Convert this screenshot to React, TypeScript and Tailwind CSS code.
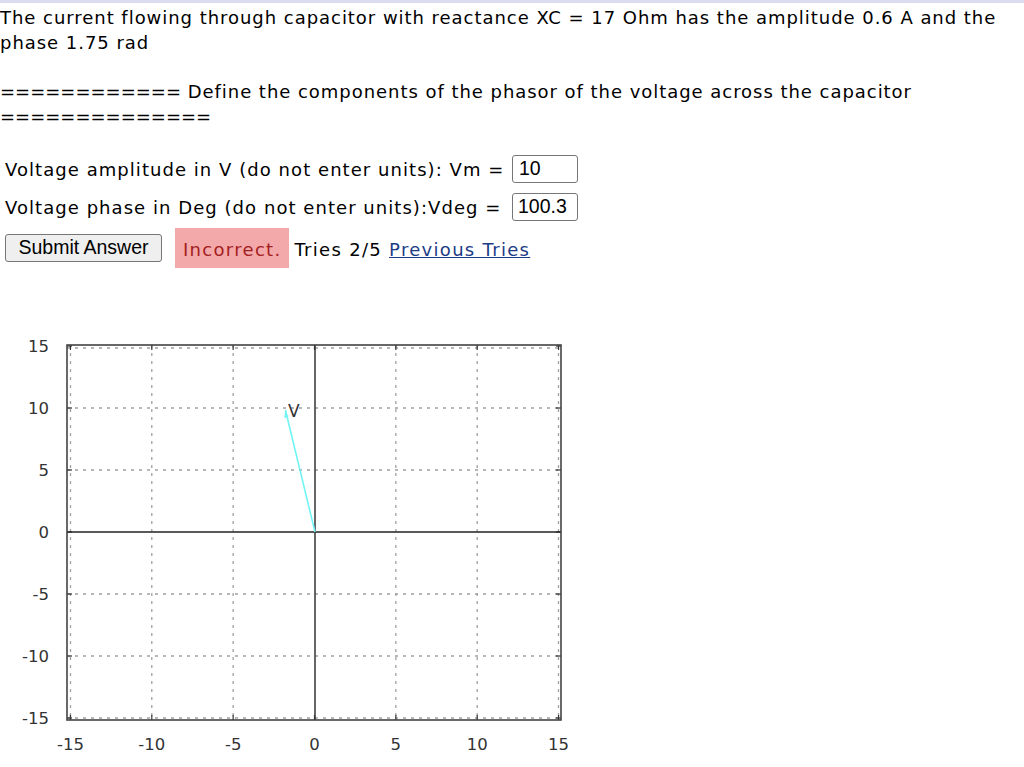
import React from 'react';

const BODY_FONT = { fontFamily: '"DejaVu Sans", Verdana, sans-serif' };

// plot mapping: page coordinates (viewBox uses page y offset)
const CX = 314.5;
const CY = 533;
const SX = 16.27;
const SY = 12.4;
const px = (v: number) => CX + v * SX;
const py = (v: number) => CY - v * SY;

const TICKS = [-15, -10, -5, 0, 5, 10, 15];

function PhasorPlot() {
  const left = 67;
  const right = 561;
  const top = 346;
  const bottom = 721;
  const ang = (100.3 * Math.PI) / 180;
  const tipX = px(10 * Math.cos(ang));
  const tipY = py(10 * Math.sin(ang));

  return (
    <svg
      width={580}
      height={437}
      viewBox="0 330 580 437"
      className="block"
      style={{ fontFamily: '"DejaVu Sans", sans-serif' }}
    >
      {/* grid */}
      {TICKS.filter((t) => t !== 0).map((t) => {
        const x = t === -15 ? 70.5 : t === 15 ? 558.5 : px(t);
        const y = t === 15 ? 349 : t === -15 ? 719 : py(t);
        return (
          <g key={t} stroke="#a0a0a0" strokeWidth={1.3} strokeDasharray="3 5">
            <line x1={x} y1={top} x2={x} y2={bottom} />
            <line x1={left} y1={y} x2={right} y2={y} />
          </g>
        );
      })}

      {/* ticks on border */}
      {TICKS.map((t) => (
        <g key={`t${t}`} stroke="#333" strokeWidth={1.2}>
          <line x1={px(t)} y1={bottom} x2={px(t)} y2={bottom - 5} />
          <line x1={px(t)} y1={top} x2={px(t)} y2={top + 5} />
          <line x1={left} y1={py(t)} x2={left + 5} y2={py(t)} />
          <line x1={right} y1={py(t)} x2={right - 5} y2={py(t)} />
        </g>
      ))}

      {/* zero axes */}
      <line x1={left} y1={CY} x2={right} y2={CY} stroke="#222" strokeWidth={1.5} />
      <line x1={315} y1={top} x2={315} y2={bottom} stroke="#333" strokeWidth={1.5} />

      {/* border */}
      <rect
        x={left}
        y={top}
        width={right - left}
        height={bottom - top}
        fill="none"
        stroke="#444"
        strokeWidth={1.6}
      />

      {/* phasor */}
      <line x1={315} y1={CY} x2={tipX} y2={tipY} stroke="#72f4f4" strokeWidth={1.6} />
      <polygon
        points={`${tipX},${tipY} ${tipX - 1.2},${tipY + 8} ${tipX + 2.8},${tipY + 7}`}
        fill="#72f4f4"
      />
      <text x={288} y={418} fontSize={17} fill="#333">
        V
      </text>

      {/* y labels */}
      {TICKS.map((t) => (
        <text key={`y${t}`} x={49} y={py(t) + 6} fontSize={16.5} fill="#333" textAnchor="end">
          {t}
        </text>
      ))}
      {/* x labels */}
      {TICKS.map((t) => (
        <text key={`x${t}`} x={px(t)} y={751} fontSize={16.5} fill="#333" textAnchor="middle">
          {t}
        </text>
      ))}
    </svg>
  );
}

export default function App() {
  return (
    <div className="min-h-[767px] w-[1024px] bg-white text-black">
      <div className="h-[3px] bg-[#dcdcf0]" />
      <div className="pt-[2px] text-[18px] leading-[25px] tracking-[0.96px]" style={BODY_FONT}>
        <p>
          The current flowing through capacitor with reactance XC = 17 Ohm has the amplitude 0.6 A and the phase 1.75 rad
        </p>
        <p className="mt-[24px]">
          <span className="tracking-normal">============</span> Define the components of the phasor of the voltage
          across the capacitor <span className="tracking-normal">==============</span>
        </p>
      </div>

      <div className="mt-[25px] flex flex-col pl-[5px] text-[18px]" style={BODY_FONT}>
        <div className="flex h-[30px] items-center">
          <span className="w-[507px] whitespace-nowrap tracking-[1.05px]">
            Voltage amplitude in V (do not enter units): Vm =
          </span>
          <input
            readOnly
            value="10"
            className="h-[28px] w-[66px] rounded-[3px] border border-[#767676] px-[6px] text-[19.5px] text-black outline-none"
            style={{ fontFamily: '"Liberation Sans", Arial, sans-serif' }}
          />
        </div>
        <div className="mt-[8px] flex h-[30px] items-center">
          <span className="w-[507px] whitespace-nowrap tracking-[1.05px]">
            Voltage phase in Deg (do not enter units):Vdeg =
          </span>
          <input
            readOnly
            value="100.3"
            className="h-[28px] w-[66px] rounded-[3px] border border-[#767676] px-[5px] text-[19.5px] text-black outline-none"
            style={{ fontFamily: '"Liberation Sans", Arial, sans-serif' }}
          />
        </div>
        <div className="mt-[6px] flex h-[40px] items-center">
          <button
            className="h-[28px] w-[157px] rounded-[3px] border border-[#767676] bg-[#efefef] text-[19.5px] leading-none text-black"
            style={{ fontFamily: '"Liberation Sans", Arial, sans-serif' }}
          >
            Submit Answer
          </button>
          <span className="ml-[13px] flex h-[40px] items-center bg-[#f3a9a9] pl-[8px] pr-[8px] pt-[3px] tracking-[1.3px] text-[#a3201f]">
            Incorrect.
          </span>
          <span className="ml-[5px] pt-[3px] tracking-[1.3px]">Tries 2/5</span>
          <a href="#" className="ml-[7px] pt-[3px] tracking-[1.3px] text-[#1c3d86] underline">
            Previous Tries
          </a>
        </div>
      </div>

      <div className="mt-[61px]">
        <PhasorPlot />
      </div>
    </div>
  );
}
